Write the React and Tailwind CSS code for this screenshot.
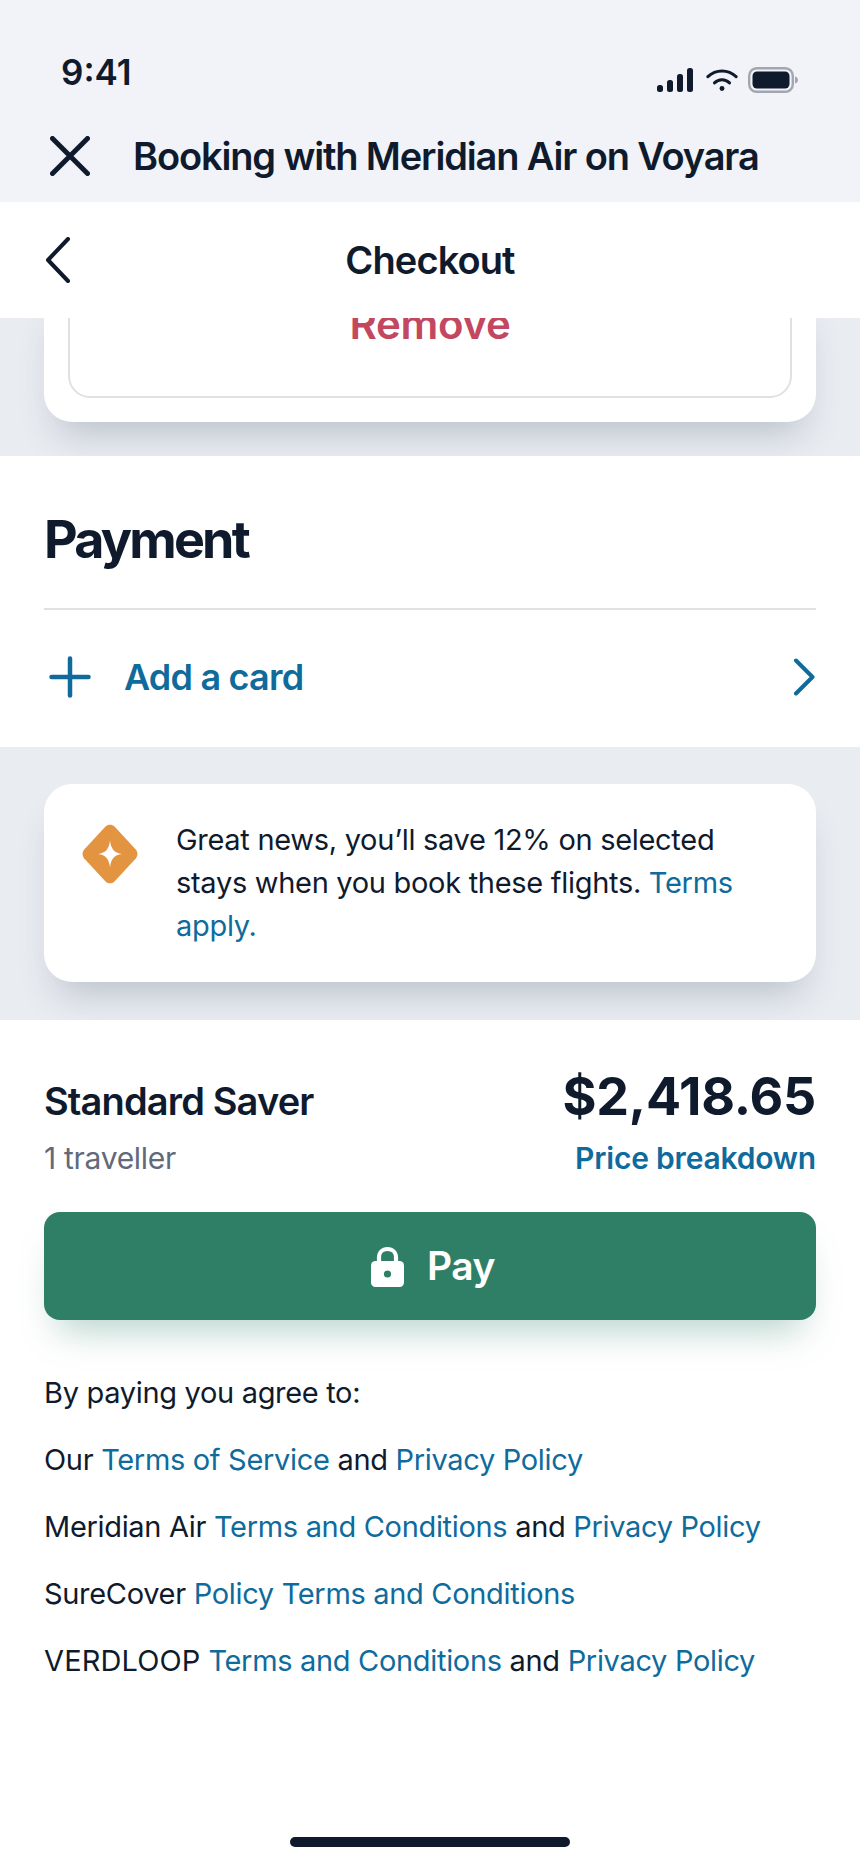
import React from "react";

const ink = "#0f1b2d";

function Signal() {
  return (
    <svg width="38" height="24" viewBox="0 0 38 24" fill={ink}>
      <rect x="1" y="17" width="6" height="7" rx="2.5" />
      <rect x="11" y="12" width="6" height="12" rx="2.5" />
      <rect x="21" y="6" width="6" height="18" rx="2.5" />
      <rect x="31" y="0" width="6" height="24" rx="2.5" />
    </svg>
  );
}

function Wifi() {
  return (
    <svg width="32" height="24" viewBox="0 0 34 24" fill="none" stroke={ink} strokeWidth="3.2" strokeLinecap="round">
      <path d="M2 8.5C10.5 0.5 23.5 0.5 32 8.5" />
      <path d="M9 15C13.5 10.5 20.5 10.5 25 15" />
      <circle cx="17" cy="21" r="2.6" fill={ink} stroke="none" />
    </svg>
  );
}

function Battery() {
  return (
    <svg width="50" height="26" viewBox="0 0 50 26" fill="none">
      <rect x="1.2" y="1.2" width="43.6" height="23.6" rx="7.5" stroke="#a2a6ae" strokeWidth="2.4" />
      <rect x="4.5" y="4.5" width="37" height="17" rx="4.5" fill={ink} />
      <path d="M47 9.5C48.8 10 50 11.3 50 13C50 14.7 48.8 16 47 16.5Z" fill="#a2a6ae" />
    </svg>
  );
}

function Spark() {
  return (
    <svg width="58" height="60" viewBox="0 0 58 58" preserveAspectRatio="none">
      <path d="M24.5 2.5C27 0 31 0 33.5 2.500L55 25C57 27.2 57 30.8 55 33L33.5 55.500C31 58 27 58 24.5 55.500L3 33C1 30.8 1 27.2 3 25Z" fill="#e39440" />
      <path d="M29 16C30 24 33 28 41 29C33 30 30 34 29 42C28 34 25 30 17 29C25 28 28 24 29 16Z" fill="#fff" />
    </svg>
  );
}

function Lock() {
  return (
    <svg width="33" height="41" viewBox="0 0 33 41">
      <path d="M8 17V11.5C8 6.5 11.5 3 16.5 3C21.5 3 25 6.5 25 11.5V17" fill="none" stroke="#fff" strokeWidth="4.2" />
      <rect x="0" y="15" width="33" height="26" rx="4.5" fill="#fff" />
      <circle cx="16.500" cy="28" r="3.600" fill="#2f7f67" />
    </svg>
  );
}

function A({ children }) {
  return <span className="text-[#0f6b9c]">{children}</span>;
}

export default function App() {
  return (
    <div className="w-[860px] h-[1864px] bg-white flex flex-col overflow-hidden text-[#0f1b2d] font-['Inter','Liberation_Sans',sans-serif]">
      <div className="h-[202px] bg-[#f1f3f8] flex flex-col shrink-0">
        <div className="h-[137px] flex items-start justify-between pl-[61px] pr-[62px]">
          <span className="mt-[52px] text-[35px] leading-[40px] font-semibold">9:41</span>
          <div className="mt-[67px] flex items-center gap-[9px]">
            <div className="mr-[3px]"><Signal /></div>
            <Wifi />
            <div className="ml-[1px]"><Battery /></div>
          </div>
        </div>
        <div className="flex items-center pl-[50px] h-[38px]">
          <svg width="40" height="40" viewBox="0 0 40 40" fill="none" stroke={ink} strokeWidth="5" strokeLinecap="round" className="shrink-0">
            <path d="M2.500 2.500L37.500 37.500M37.500 2.500L2.500 37.500" />
          </svg>
          <span className="ml-[43px] text-[38px] leading-[44px] font-semibold tracking-[-1.14px] whitespace-nowrap">Booking with Meridian Air on Voyara</span>
        </div>
      </div>

      <div className="relative z-10 h-[116px] bg-white flex items-center justify-center shrink-0">
        <svg width="26" height="46" viewBox="0 0 26 46" fill="none" stroke={ink} strokeWidth="4" strokeLinecap="round" strokeLinejoin="round" className="absolute left-[45px] top-[35px]">
          <path d="M23 2L3 23L23 44" />
        </svg>
        <span className="text-[38px] leading-[44px] font-semibold tracking-[-0.9px]">Checkout</span>
      </div>

      <div className="h-[138px] bg-[#e9ecf1] overflow-hidden px-[44px] shrink-0">
        <div className="-mt-[30px] h-[134px] bg-white rounded-[28px] px-[24px] pb-[24px] shadow-[0_24px_36px_-14px_rgba(60,75,100,0.28)]">
          <div className="h-full border-2 border-[#dfe1e4] rounded-b-[22px] flex justify-center">
            <span className="mt-[12px] h-[44px] text-[42px] leading-[44px] font-semibold tracking-[-0.3px] text-[#c2475f]">Remove</span>
          </div>
        </div>
      </div>

      <div className="h-[291px] bg-white px-[44px] shrink-0">
        <h2 className="pt-[54px] text-[52px] leading-[60px] font-bold tracking-[-2.8px]">Payment</h2>
        <div className="mt-[38px] h-[2px] bg-[#dfe1e4]" />
        <div className="mt-[34px] flex items-center h-[66px]">
          <svg width="42" height="42" viewBox="0 0 42 42" fill="none" stroke="#0f6b9c" strokeWidth="4.5" strokeLinecap="round" className="ml-[5px] shrink-0">
            <path d="M21 2.500V39.500M2.500 21H39.500" />
          </svg>
          <span className="ml-[33px] text-[36px] leading-[44px] font-semibold tracking-[-0.8px] text-[#0f6b9c]">Add a card</span>
          <svg width="22" height="38" viewBox="0 0 22 38" fill="none" stroke="#0f6b9c" strokeWidth="4" strokeLinecap="round" strokeLinejoin="round" className="ml-auto mr-[1px] shrink-0">
            <path d="M3 2.500L19.500 19L3 35.500" />
          </svg>
        </div>
      </div>

      <div className="h-[273px] bg-[#e9ecf1] px-[44px] pt-[37px] shrink-0">
        <div className="h-[198px] bg-white rounded-[28px] flex pt-[36px] pl-[37px] pr-[50px] shadow-[0_24px_36px_-14px_rgba(60,75,100,0.28)]">
          <div className="mt-[4px] shrink-0">
            <Spark />
          </div>
          <p className="ml-[37px] text-[29px] leading-[43px] tracking-[-0.3px] text-[#0f1b2d] -mt-[2px]">
            Great news, you’ll save 12% on selected stays when you book these flights. <A>Terms apply.</A>
          </p>
        </div>
      </div>

      <div className="flex-1 bg-white px-[44px]">
        <div className="pt-[49px] flex justify-between items-start">
          <div>
            <div className="mt-[10px] text-[38px] leading-[44px] font-semibold tracking-[-0.86px]">Standard Saver</div>
            <div className="mt-[15px] text-[30px] leading-[40px] tracking-[-0.3px] text-[#62697a]">1 traveller</div>
          </div>
          <div className="flex flex-col items-end">
            <div className="text-[52px] leading-[56px] font-bold tracking-[-0.2px]">$2,418.65</div>
            <div className="mt-[13px] text-[30px] leading-[40px] font-semibold tracking-[-0.2px] text-[#0f6b9c]">Price breakdown</div>
          </div>
        </div>
        <div className="mt-[34px] h-[108px] rounded-[16px] bg-[#2f7f67] flex items-center justify-center gap-[23px] pl-[6px] shadow-[0_24px_36px_-14px_rgba(47,127,103,0.35)] text-white">
          <Lock />
          <span className="text-[39px] leading-[44px] font-semibold tracking-[-0.5px]">Pay</span>
        </div>
        <div className="mt-[51px] text-[29px] leading-[43px] tracking-[-0.32px] whitespace-nowrap flex flex-col gap-[24px]">
          <div>By paying you agree to:</div>
          <div>Our <A>Terms of Service</A> and <A>Privacy Policy</A></div>
          <div>Meridian Air <A>Terms and Conditions</A> and <A>Privacy Policy</A></div>
          <div>SureCover <A>Policy Terms and Conditions</A></div>
          <div><span className="tracking-[0.13px]">VERDLOOP</span> <A>Terms and Conditions</A> and <A>Privacy Policy</A></div>
        </div>
        <div className="fixed bottom-[17px] left-[290px] w-[280px] h-[10px] rounded-full bg-[#0f1b2d]" />
      </div>
    </div>
  );
}
